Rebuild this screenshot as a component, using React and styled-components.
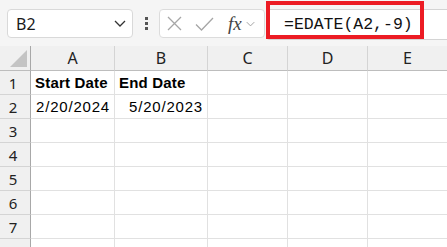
import React from 'react';
import styled, { createGlobalStyle } from 'styled-components';

const Global = createGlobalStyle`
  html, body { margin: 0; padding: 0; background: #fff; overflow: hidden; }
`;

const Page = styled.div`
  width: 447px;
  height: 247px;
  overflow: hidden;
  background: #fff;
`;

const Toolbar = styled.div`
  display: flex;
  align-items: flex-start;
  height: 46px;
  box-sizing: border-box;
  padding: 9px 0 0 7px;
  background: #f5f5f5;
`;

const NameBox = styled.div`
  display: flex;
  align-items: center;
  justify-content: space-between;
  width: 126px;
  height: 29px;
  box-sizing: border-box;
  padding: 0 6px 0 8px;
  background: #fff;
  border: 1px solid #d9d9d9;
  border-radius: 4px;
  font-family: "Noto Sans", "Open Sans", sans-serif;
  font-size: 16px;
  color: #1a1a1a;
`;

const Dots = styled.div`
  width: 26px;
  height: 29px;
  display: flex;
  flex-direction: column;
  align-items: center;
  justify-content: center;
  gap: 2px;
  span {
    width: 3px;
    height: 3px;
    background: #555;
  }
`;

const FxBox = styled.div`
  display: flex;
  align-items: center;
  width: 106px;
  height: 29px;
  box-sizing: border-box;
  padding-left: 7px;
  background: #fff;
  border: 1px solid #dcdcdc;
  border-radius: 4px;
  gap: 0;
`;

const Fx = styled.span`
  font-family: "Liberation Serif", serif;
  font-style: italic;
  font-size: 19px;
  color: #444;
  margin: 0 4px 0 14px;
  line-height: 1;
`;

const FormulaInput = styled.div`
  position: relative;
  flex: 1;
  height: 31px;
  box-sizing: border-box;
  margin-left: 1px;
  background: #fff;
  border: 1px solid #d4d4d4;
  border-right: none;
  border-radius: 4px 0 0 4px;
  display: flex;
  align-items: center;
  padding-left: 17px;
  font-family: "Liberation Mono", monospace;
  font-size: 16.5px;
  color: #111;
`;

const Highlight = styled.div`
  position: absolute;
  left: -1px;
  top: -9px;
  width: 158px;
  height: 38px;
  box-sizing: border-box;
  border: 4px solid #ec1c24;
  pointer-events: none;
`;

const Grid = styled.div`
  display: grid;
  grid-template-columns: 31px 84px 93px 80px 80px 80px;
  grid-auto-rows: 24px;
  grid-template-rows: 25px;
`;

const ColHead = styled.div`
  box-sizing: border-box;
  background: #f0f0f0;
  border-bottom: 1px solid #bdbdbd;
  border-right: 1px solid ${({ corner }) => (corner ? '#a8a8a8' : '#d4d4d4')};
  display: flex;
  align-items: center;
  justify-content: center;
  position: relative;
  font-family: "Noto Sans", "Open Sans", sans-serif;
  font-size: 16px;
  color: #222;
`;

const RowHead = styled.div`
  box-sizing: border-box;
  background: #f0f0f0;
  border-right: 1px solid #a8a8a8;
  border-bottom: 1px solid #d4d4d4;
  display: flex;
  align-items: center;
  justify-content: center;
  padding-right: 4px;
  font-family: "Noto Sans", "Open Sans", sans-serif;
  font-size: 15px;
  color: #222;
`;

const Cell = styled.div`
  box-sizing: border-box;
  border-right: 1px solid #e1e1e1;
  border-bottom: 1px solid #e1e1e1;
  display: flex;
  align-items: center;
  justify-content: ${({ num }) => (num ? 'flex-end' : 'flex-start')};
  padding: 0 4px 0 4px;
  font-family: "Liberation Sans", Arial, sans-serif;
  font-size: 15px;
  font-weight: ${({ bold }) => (bold ? 700 : 400)};
  letter-spacing: ${({ num }) => (num ? '0.8px' : '0.2px')};
  color: #000;
  white-space: nowrap;
`;

const Chevron = ({ w = 12, h = 7, color = '#333' }) => (
  <svg width={w} height={h} viewBox="0 0 12 7">
    <path d="M1 1 L6 6 L11 1" fill="none" stroke={color} strokeWidth="1.3" />
  </svg>
);

const cols = ['A', 'B', 'C', 'D', 'E'];
const data = {
  1: [{ t: 'Start Date', bold: true }, { t: 'End Date', bold: true }],
  2: [{ t: '2/20/2024', num: true }, { t: '5/20/2023', num: true }],
};

export default function App() {
  return (
    <Page>
      <Global />
      <Toolbar>
        <NameBox>
          <span>B2</span>
          <Chevron />
        </NameBox>
        <Dots>
          <span />
          <span />
          <span />
        </Dots>
        <FxBox>
          <svg width="15" height="15" viewBox="0 0 15 15">
            <path d="M1 1 L14 14 M14 1 L1 14" stroke="#a6a6a6" strokeWidth="1.3" fill="none" />
          </svg>
          <svg width="19" height="14" viewBox="0 0 19 14" style={{ marginLeft: 13 }}>
            <path d="M1 7.5 L6.5 13 L18 1" stroke="#a6a6a6" strokeWidth="1.3" fill="none" />
          </svg>
          <Fx>fx</Fx>
          <Chevron w={9} h={6} color="#a0a0a0" />
        </FxBox>
        <FormulaInput>
          =EDATE(A2,-9)
          <Highlight />
        </FormulaInput>
      </Toolbar>
      <Grid>
        <ColHead corner>
          <svg width="31" height="25" viewBox="0 0 31 25" style={{ position: 'absolute', left: 0, top: 0 }}>
            <polygon points="27,4 27,21 10,21" fill="#c4c4c4" />
          </svg>
        </ColHead>
        {cols.map((c) => (
          <ColHead key={c}>{c}</ColHead>
        ))}
        {[1, 2, 3, 4, 5, 6, 7, 8].map((r) => (
          <React.Fragment key={r}>
            <RowHead>{r}</RowHead>
            {cols.map((c, i) => {
              const v = (data[r] || [])[i];
              return (
                <Cell key={c} bold={v && v.bold} num={v && v.num}>
                  {v ? v.t : ''}
                </Cell>
              );
            })}
          </React.Fragment>
        ))}
      </Grid>
    </Page>
  );
}
